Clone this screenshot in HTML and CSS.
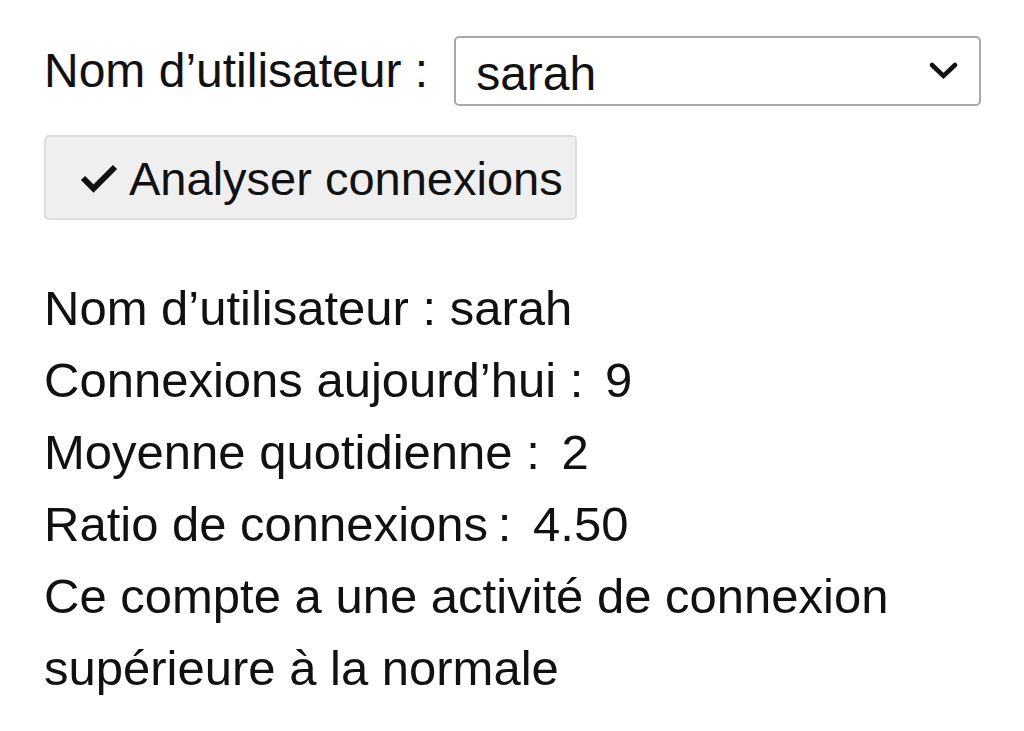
FILE: index.html
```html
<!DOCTYPE html>
<html lang="fr">
<head>
<meta charset="utf-8">
<link rel="stylesheet" href="styles.css">
</head>
<body>
<div class="app">
  <div class="field">
    <label class="label" for="user">Nom d’utilisateur :</label>
    <div class="select" id="user">
      <span class="select-value">sarah</span>
      <svg class="chevron" viewBox="0 0 29 18" width="29" height="18"><path d="M3 3 L14.5 14 L26 3" fill="none" stroke="#111" stroke-width="4.5" stroke-linecap="round" stroke-linejoin="miter"/></svg>
    </div>
  </div>
  <button class="btn" type="button">
    <svg class="check" viewBox="0 0 38 32" width="38" height="32"><path d="M3 16 L13.5 26.5 L35 5" fill="none" stroke="#111" stroke-width="6" stroke-linecap="butt" stroke-linejoin="miter"/></svg>
    <span>Analyser connexions</span>
  </button>
  <div class="results">
    <div class="line">Nom d’utilisateur : sarah</div>
    <div class="line">Connexions aujourd’hui : <span class="val">9</span></div>
    <div class="line">Moyenne quotidienne : <span class="val">2</span></div>
    <div class="line">Ratio de connexions&#8239;: <span class="val">4.50</span></div>
    <div class="line">Ce compte a une activité de connexion supérieure à la normale</div>
  </div>
</div>
</body>
</html>
```
FILE: styles.css
```css
html, body {
  margin: 0;
  padding: 0;
  background: #ffffff;
}
body {
  font-family: "Liberation Sans", Arial, sans-serif;
  color: #111;
  font-size: 48px;
}
.app {
  padding: 36px 0 0 44px;
  width: 940px;
}
.field {
  display: flex;
  align-items: center;
  gap: 26px;
}
.label {
  line-height: 70px;
  white-space: nowrap;
}
.select {
  box-sizing: border-box;
  width: 527px;
  height: 70px;
  border: 2px solid #a8a8a8;
  border-radius: 5px;
  display: flex;
  align-items: center;
  justify-content: space-between;
  padding: 4px 21px 0 20px;
  background: #fff;
}
.chevron {
  display: block;
  margin-top: -4px;
}
.btn {
  margin-top: 29px;
  box-sizing: border-box;
  height: 85px;
  width: 533px;
  background: #efefef;
  border: 2px solid #dedede;
  border-radius: 5px;
  display: flex;
  align-items: center;
  gap: 11px;
  padding: 2px 0 0 34px;
  font: inherit;
  font-size: 47px;
  color: #111;
  white-space: nowrap;
}
.check {
  display: block;
  margin-top: -2px;
}
.results {
  margin-top: 52px;
  font-size: 49px;
}
.line {
  line-height: 72px;
}
.val {
  margin-left: 8px;
}
```
